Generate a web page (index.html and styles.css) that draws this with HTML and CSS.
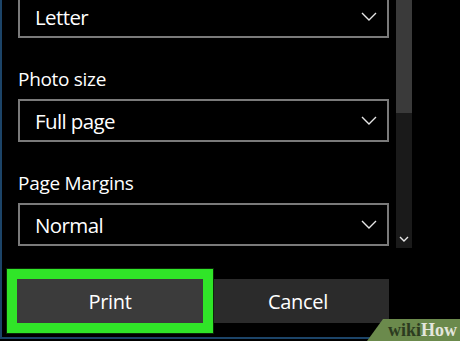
FILE: index.html
```html
<!DOCTYPE html>
<html lang="en">
<head>
    <meta charset="UTF-8">
    <title>Print</title>
    <link rel="stylesheet" href="styles.css">
</head>
<body>
<div class="frame">
    <div class="panel">
        <div class="fields">
            <div class="select select-first">
                <span>Letter</span>
                <svg class="chev" width="16" height="9" viewBox="0 0 16 9"><path d="M1 1 L8 8 L15 1"/></svg>
            </div>

            <div class="field-label">Photo size</div>
            <div class="select">
                <span>Full page</span>
                <svg class="chev" width="16" height="9" viewBox="0 0 16 9"><path d="M1 1 L8 8 L15 1"/></svg>
            </div>

            <div class="field-label">Page Margins</div>
            <div class="select">
                <span>Normal</span>
                <svg class="chev" width="16" height="9" viewBox="0 0 16 9"><path d="M1 1 L8 8 L15 1"/></svg>
            </div>
        </div>

        <div class="scrollbar">
            <div class="thumb"></div>
            <svg class="scroll-down" width="10" height="6" viewBox="0 0 10 6"><path d="M1 1 L5 5 L9 1"/></svg>
        </div>
    </div>

    <div class="actions">
        <button class="btn btn-print">Print</button>
        <button class="btn btn-cancel">Cancel</button>
    </div>
</div>

<div class="wikihow"><span class="wiki">wiki</span><span class="how">How</span></div>
</body>
</html>
```

FILE: styles.css
```css
:root {
    --bg: #000000;
    --fg: #ffffff;
    --line: #7a7a7a;
    --frame: #1c4468;
    --highlight: #30e528;
}
html, body {
    margin: 0;
    height: 341px;
    overflow: hidden;
}
body {
    background: var(--bg);
    color: var(--fg);
    font-family: "Open Sans", "Noto Sans", sans-serif;
    position: relative;
}
.frame {
    height: 337px;
    border-left: 2px solid var(--frame);
    border-bottom: 2px solid var(--frame);
}
.panel {
    display: flex;
    gap: 7px;
    padding-left: 16px;
    height: 248px;
}
.fields {
    width: 371px;
    margin-top: -5px;
}
.field-label {
    font-size: 19px;
    line-height: 26px;
    margin: 28px 0 7px;
    letter-spacing: -0.3px;
}
.select {
    box-sizing: border-box;
    height: 43px;
    border: 2px solid var(--line);
    display: flex;
    align-items: center;
    justify-content: space-between;
    padding: 0 10px 0 15px;
    font-size: 20.5px;
    letter-spacing: -0.6px;
}
.chev path, .scroll-down path {
    fill: none;
    stroke: #e6e6e6;
    stroke-width: 1.4;
}
.scrollbar {
    width: 16px;
    height: 248px;
    background: #1a1a1a;
    display: flex;
    flex-direction: column;
    align-items: center;
}
.thumb {
    width: 16px;
    height: 113px;
    background: #3a3a3a;
}
.scroll-down {
    margin-top: auto;
    margin-bottom: 6px;
}
.actions {
    display: grid;
    grid-template-columns: 186px 182px;
    gap: 4px;
    padding-left: 15px;
    margin-top: 31px;
}
.btn {
    height: 44px;
    border: none;
    color: var(--fg);
    font-family: inherit;
    font-size: 20px;
    letter-spacing: -0.3px;
}
.btn-print {
    background: #3b3b3b;
    position: relative;
    z-index: 1;
    box-shadow: 0 0 0 10px var(--highlight), 0 0 0 11px #0a2a08;
}
.btn-cancel {
    background: #2b2b2b;
}
.wikihow {
    position: absolute;
    right: 0;
    bottom: 0;
    width: 93px;
    height: 22px;
    box-sizing: border-box;
    padding-left: 21px;
    background: #6b8a4c;
    clip-path: polygon(16px 0, 100% 0, 100% 100%, 0 100%);
    font-family: "Liberation Serif", serif;
    font-weight: bold;
    font-size: 18px;
    line-height: 22px;
}
.wiki { color: #2c3b1f; }
.how { color: #e4e6dc; }
```
